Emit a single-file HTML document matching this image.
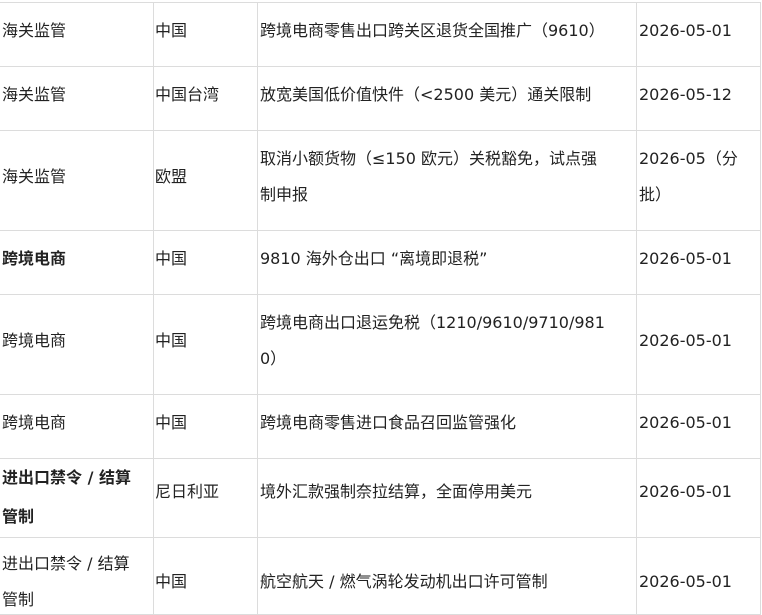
<!DOCTYPE html>
<html><head><meta charset="utf-8"><style>
body{margin:0;background:#fff;width:762px;height:615px;overflow:hidden}
table{position:absolute;left:-1px;top:2px;border-collapse:collapse;table-layout:fixed;font-family:"DejaVu Sans","Noto Sans CJK SC",sans-serif;font-size:16px;color:#222;line-height:36px}
td{border:1px solid #dcdcdc;padding:0 0 8px 2px;vertical-align:middle;white-space:nowrap;overflow:hidden}
td:nth-child(2){padding-left:1px}
td.t{padding-bottom:0}
td.t span{position:relative;display:block}
tr.r8 td{padding-bottom:0;padding-top:12px}
tr.r8 td.t{padding-top:0}
b{font-weight:bold}
</style></head><body>
<table>
<colgroup><col style="width:154px"><col style="width:104px"><col style="width:379px"><col style="width:124px"></colgroup>
<tr style="height:64px"><td>海关监管</td><td>中国</td><td>跨境电商零售出口跨关区退货全国推广（9610）</td><td>2026-05-01</td></tr>
<tr style="height:64px"><td>海关监管</td><td>中国台湾</td><td>放宽美国低价值快件（&lt;2500 美元）通关限制</td><td>2026-05-12</td></tr>
<tr style="height:100px"><td>海关监管</td><td>欧盟</td><td>取消小额货物（≤150 欧元）关税豁免，试点强<br>制申报</td><td>2026-05（分<br>批）</td></tr>
<tr style="height:64px"><td><b>跨境电商</b></td><td>中国</td><td>9810 海外仓出口 “离境即退税”</td><td>2026-05-01</td></tr>
<tr style="height:100px"><td>跨境电商</td><td>中国</td><td>跨境电商出口退运免税（1210/9610/9710/981<br>0）</td><td>2026-05-01</td></tr>
<tr style="height:64px"><td>跨境电商</td><td>中国</td><td>跨境电商零售进口食品召回监管强化</td><td>2026-05-01</td></tr>
<tr style="height:77px"><td class="t" style="line-height:39px"><span style="top:-1px"><b>进出口禁令 / 结算<br>管制</b></span></td><td style="padding-bottom:12px">尼日利亚</td><td style="padding-bottom:12px">境外汇款强制奈拉结算，全面停用美元</td><td style="padding-bottom:12px">2026-05-01</td></tr>
<tr class="r8" style="height:77px"><td class="t"><span style="top:6px">进出口禁令 / 结算<br>管制</span></td><td>中国</td><td>航空航天 / 燃气涡轮发动机出口许可管制</td><td>2026-05-01</td></tr>
</table>
</body></html>
